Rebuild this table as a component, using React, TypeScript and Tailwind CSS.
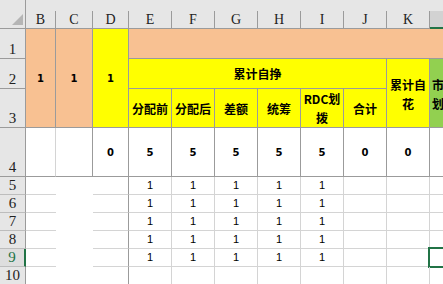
import React from "react";

const DARK = "border-[#9b9b9b]";
const LIGHT = "border-[#d4d4d4]";

const cjk = "[font-family:'Noto_Sans_CJK_SC','Liberation_Sans',sans-serif]";
const num = "[font-family:'DejaVu_Sans','Liberation_Sans',sans-serif]";
const hdrFont = "[font-family:'Liberation_Serif','DejaVu_Serif',serif]";

const cols = ["B", "C", "D", "E", "F", "G", "H", "I", "J", "K", "L"];
const colStart = [
  "col-start-2",
  "col-start-3",
  "col-start-4",
  "col-start-5",
  "col-start-6",
  "col-start-7",
  "col-start-8",
  "col-start-9",
  "col-start-10",
  "col-start-11",
  "col-start-12",
];
const rowStart = [
  "row-start-2",
  "row-start-3",
  "row-start-4",
  "row-start-5",
  "row-start-6",
  "row-start-7",
  "row-start-8",
  "row-start-9",
  "row-start-10",
  "row-start-11",
];

function ColHeader({ label, idx }: { label: string; idx: number }) {
  const active = label === "L";
  return (
    <div
      className={`${colStart[idx]} row-start-1 flex flex-col bg-[#e6e6e6] ${
        active ? "border-b-2 border-[#217346]" : `border-b ${DARK}`
      }`}
    >
      <div className="h-[11px]" />
      <div
        className={`flex flex-1 items-end justify-center border-r ${DARK} ${
          active ? "bg-[#d2d2d2]" : ""
        } ${hdrFont} text-[14px] leading-none pb-[1px] text-[#222]`}
      >
        {label}
      </div>
    </div>
  );
}

function RowHeader({ n }: { n: number }) {
  const active = n === 9;
  return (
    <div
      className={`col-start-1 ${rowStart[n - 1]} flex items-end justify-center border-b ${
        n <= 4 ? DARK : "border-[#bdbdbd]"
      } ${
        active
          ? "border-r-2 border-r-[#217346] bg-[#dedede] text-[#217346]"
          : `border-r border-r-[#9b9b9b] bg-[#e6e6e6] text-[#222]`
      } ${hdrFont} text-[15px] leading-none pb-[1px]`}
    >
      {n}
    </div>
  );
}

const labels = ["分配前", "分配后", "差额", "统筹", "RDC划拨", "合计"];
const row4 = ["0", "5", "5", "5", "5", "5", "0", "0", ""];

export default function App() {
  return (
    <div className="w-[443px] h-[284px] overflow-hidden bg-white">
      <div className="grid grid-cols-[26px_30px_37px_36px_repeat(8,43px)] grid-rows-[29px_30px_30px_39px_49px_repeat(6,18px)] w-max">
        {/* corner with select-all triangle */}
        <div className={`col-start-1 row-start-1 relative bg-[#e6e6e6] border-r border-b ${DARK}`}>
          <svg className="absolute left-[12px] top-[14px]" width="12" height="12" viewBox="0 0 12 12">
            <polygon points="11,0 11,11 0,11" fill="#b5b5b5" />
          </svg>
        </div>
        {cols.map((c, i) => (
          <ColHeader key={c} label={c} idx={i} />
        ))}
        {Array.from({ length: 10 }, (_, i) => (
          <RowHeader key={i} n={i + 1} />
        ))}

        {/* rows 1-3: merged header block */}
        <div className={`col-start-2 row-start-2 row-span-3 flex items-center justify-center bg-[#f8c192] border-r border-b ${DARK} ${num} text-[10px] font-bold`}>
          1
        </div>
        <div className={`col-start-3 row-start-2 row-span-3 flex items-center justify-center bg-[#f8c192] border-r border-b ${DARK} ${num} text-[10px] font-bold`}>
          1
        </div>
        <div className={`col-start-4 row-start-2 row-span-3 flex items-center justify-center bg-[#ffff00] border-r border-b ${DARK} ${num} text-[10px] font-bold`}>
          1
        </div>
        <div className={`col-start-5 col-span-8 row-start-2 bg-[#f8c192] border-b ${DARK}`} />
        <div className={`col-start-5 col-span-6 row-start-3 flex items-center justify-center bg-[#ffff00] border-r border-b ${DARK} ${cjk} text-[12px] font-bold text-black`}>
          累计自挣
        </div>
        <div className={`col-start-11 row-start-3 row-span-2 flex items-center justify-center bg-[#ffff00] border-r border-b ${DARK} ${cjk} text-[12px] font-bold leading-[19px] text-center text-black pt-[1px]`}>
          累计自
          <br />花
        </div>
        <div className={`col-start-12 row-start-3 row-span-2 flex items-center bg-[#92d050] border-r border-b ${DARK} ${cjk} text-[12px] font-bold leading-[19px] text-black pl-[2px] pt-[1px]`}>
          市场自
          <br />
          划拨
        </div>
        {labels.map((t, i) => (
          <div
            key={t}
            className={`${colStart[i + 3]} row-start-4 flex items-center justify-center text-center bg-[#ffff00] border-r border-b ${DARK} ${cjk} text-[12px] font-bold leading-[19px] text-black`}
          >
            {t === "RDC划拨" ? (
              <span>
                RDC划
                <br />拨
              </span>
            ) : (
              t
            )}
          </div>
        ))}

        {/* row 4: totals */}
        <div className={`col-start-2 row-start-5 border-b ${DARK} border-r border-r-[#d4d4d4]`} />
        <div className={`col-start-3 row-start-5 border-r border-b ${DARK}`} />
        {row4.map((v, i) => (
          <div
            key={i}
            className={`${colStart[i + 2]} row-start-5 flex items-center justify-center border-r border-b ${DARK} ${num} text-[10px] font-bold text-black`}
          >
            {v}
          </div>
        ))}

        {/* rows 5-10: data */}
        {Array.from({ length: 6 }, (_, r) => {
          const rs = rowStart[r + 4];
          return (
            <React.Fragment key={r}>
              <div className={`col-start-2 ${rs} border-b ${LIGHT}`} />
              <div className={`col-start-3 ${rs}`} />
              <div className={`col-start-4 ${rs} border-b ${LIGHT} border-r border-r-[#9b9b9b]`} />
              {Array.from({ length: 8 }, (_, c) => {
                const selected = r === 4 && c === 7;
                return (
                  <div
                    key={c}
                    className={`${colStart[c + 3]} ${rs} relative flex items-center justify-center border-r border-b ${LIGHT} [font-family:'Liberation_Sans',sans-serif] text-[11px] text-black`}
                  >
                    {r < 5 && c < 5 ? "1" : ""}
                    {selected && (
                      <div className="absolute -left-[2px] -top-[2px] w-[46px] h-[21px] border-2 border-[#217346]" />
                    )}
                  </div>
                );
              })}
            </React.Fragment>
          );
        })}
      </div>
    </div>
  );
}
